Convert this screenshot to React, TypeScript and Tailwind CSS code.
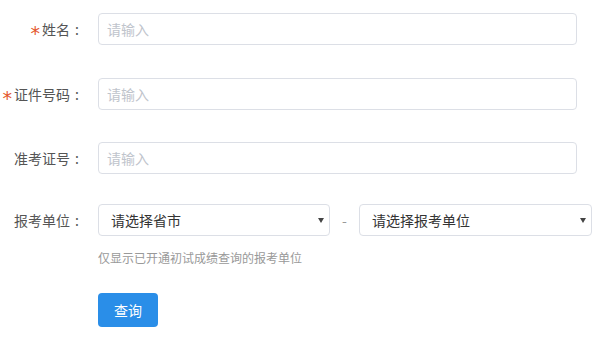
const font = { fontFamily: '"Noto Sans CJK SC", "Noto Sans", sans-serif' };

function Label({ text, required }: { text: string; required?: boolean }) {
  return (
    <div className="flex w-[84px] shrink-0 items-center justify-end text-[14px] text-[#555]">
      {required && (
        <span className="mr-[2px] translate-y-[4px] text-[19px] leading-none text-[#e4572e]" style={{ fontFamily: '"DejaVu Sans", sans-serif' }}>
          *
        </span>
      )}
      <span>{text}</span>
      <span className="inline-block w-[14px] text-center">:</span>
    </div>
  );
}

function Select({ text, width }: { text: string; width: string }) {
  return (
    <div
      className={`${width} flex h-8 items-center justify-between rounded-[4px] border border-[#dcdfe6] pl-[12px] pr-[5px] text-[14px] text-[#333]`}
    >
      <span>{text}</span>
      <svg width="6" height="5" viewBox="0 0 6 5">
        <path d="M0 0h6L3 5z" fill="#444" />
      </svg>
    </div>
  );
}

export default function App() {
  return (
    <div className="h-[337px] w-[600px] bg-white" style={font}>
      <div className="flex flex-col pt-[13px]">
        {/* text inputs */}
        {[
          { label: "姓名", required: true, mb: "mb-[33px]" },
          { label: "证件号码", required: true, mb: "mb-[32px]" },
          { label: "准考证号", required: false, mb: "mb-[30px]" },
        ].map((f) => (
          <div key={f.label} className={`flex items-center gap-[14px] ${f.mb}`}>
            <Label text={f.label} required={f.required} />
            <input
              placeholder="请输入"
              className="h-8 w-[479px] rounded-[4px] border border-[#dcdfe6] px-[8px] text-[14px] outline-none placeholder:text-[#c0c4cc]"
            />
          </div>
        ))}

        {/* unit selects */}
        <div className="flex items-center gap-[14px]">
          <Label text="报考单位" />
          <div className="flex items-center">
            <Select text="请选择省市" width="w-[232px]" />
            <span className="w-[29px] text-center text-[14px] text-[#999]">-</span>
            <Select text="请选择报考单位" width="w-[233px]" />
          </div>
        </div>

        <div className="ml-[98px] mt-[13px] text-[12px] text-[#999]">仅显示已开通初试成绩查询的报考单位</div>

        <div className="ml-[98px] mt-[26px]">
          <button className="h-[34px] w-[60px] rounded-[4px] bg-[#2a8ee8] text-[14px] text-white">查询</button>
        </div>
      </div>
    </div>
  );
}
